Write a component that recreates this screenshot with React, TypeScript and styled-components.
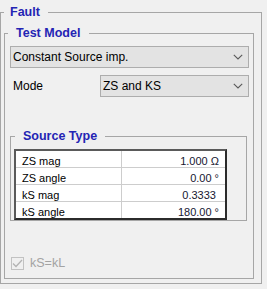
import React from 'react';
import styled, { createGlobalStyle, css } from 'styled-components';

const GlobalStyle = createGlobalStyle`
  html, body {
    margin: 0;
    padding: 0;
    background: #f0f0f0;
  }
  body {
    width: 267px;
    height: 289px;
    overflow: hidden;
    font-family: "Liberation Sans", Arial, sans-serif;
    font-size: 12px;
    color: #000;
  }
  * {
    box-sizing: border-box;
  }
`;

const groupBase = css`
  margin: 0;
  min-width: 0;
  border: 1px solid #a6a6a6;
`;

const FaultGroup = styled.fieldset`
  ${groupBase};
  width: 262px;
  margin-top: 5px;
  padding: 7px 7px 4px 3px;
`;

const ModelGroup = styled.fieldset`
  ${groupBase};
  padding: 6px 4px 8px 5px;
`;

const SourceGroup = styled.fieldset`
  ${groupBase};
  margin: 32px 2px 0 0;
  padding: 6px 0 0 3px;
`;

const Title = styled.legend<{ $shift: number; $padL: number; $padR: number }>`
  margin-left: ${(p) => p.$shift}px;
  padding: 0 ${(p) => p.$padR}px 0 ${(p) => p.$padL}px;
  font-weight: bold;
  font-size: 12.5px;
  line-height: 14px;
  color: #2424b4;
`;

const Combo = styled.div`
  height: 22px;
  display: flex;
  align-items: center;
  justify-content: space-between;
  padding: 0 5px 0 2px;
  border: 1px solid #adadad;
  background: #e3e3e3;
  font-size: 12px;
  white-space: nowrap;
`;

const ModeRow = styled.div`
  display: grid;
  grid-template-columns: 90px 1fr;
  align-items: center;
  margin-top: 7px;
`;

const ModeLabel = styled.span`
  padding-left: 3px;
  font-size: 12px;
`;

const Table = styled.div`
  width: 213px;
  border: 2px solid #2b2b2b;
  border-color: #5a5a5a #2b2b2b #2b2b2b #5a5a5a;
  background: #fff;
`;

const Row = styled.div`
  display: grid;
  grid-template-columns: 105px 1fr;
  border-bottom: 1px solid #cdcdcd;

  &:last-child {
    border-bottom: none;
  }
`;

const Cell = styled.div<{ $value?: boolean }>`
  height: 16px;
  overflow: hidden;
  padding-top: 4px;
  line-height: 13px;
  font-size: 11px;
  white-space: nowrap;
  color: ${(p) => (p.$value ? '#161630' : '#000')};
  text-align: ${(p) => (p.$value ? 'right' : 'left')};
  padding-left: ${(p) => (p.$value ? 0 : 6)}px;
  padding-right: ${(p) => (p.$value ? 6 : 0)}px;
  border-left: ${(p) => (p.$value ? '1px solid #cdcdcd' : 'none')};
`;

const CheckRow = styled.label`
  display: flex;
  align-items: center;
  gap: 6px;
  margin: 35px 0 0 1px;
  height: 14px;
  color: #a3a3a3;
  font-size: 12.5px;
`;

const CheckBox = styled.span`
  width: 13px;
  height: 13px;
  border: 1px solid #c2c2c2;
  background: #f0f0f0;
  display: flex;
  align-items: center;
  justify-content: center;
`;

const Chevron = () => (
  <svg width="10" height="6" viewBox="0 0 10 6">
    <path d="M0.8 0.8 L5 5 L9.2 0.8" fill="none" stroke="#5a5a5a" strokeWidth="1.1" />
  </svg>
);

const rows = [
  { label: 'ZS mag', value: '1.000 Ω' },
  { label: 'ZS angle', value: '0.00 °' },
  { label: 'kS mag', value: '0.3333\u00a0' },
  { label: 'kS angle', value: '180.00 °' },
];

export default function App() {
  return (
    <>
      <GlobalStyle />
      <FaultGroup>
        <Title $shift={0} $padL={6} $padR={8}>
          Fault
        </Title>
        <ModelGroup>
          <Title $shift={-2} $padL={8} $padR={9}>
            Test Model
          </Title>
          <Combo>
            <span>Constant Source imp.</span>
            <Chevron />
          </Combo>
          <ModeRow>
            <ModeLabel>Mode</ModeLabel>
            <Combo>
              <span>ZS and KS</span>
              <Chevron />
            </Combo>
          </ModeRow>
          <SourceGroup>
            <Title $shift={1} $padL={8} $padR={8}>
              Source Type
            </Title>
            <Table>
              {rows.map((r) => (
                <Row key={r.label}>
                  <Cell>{r.label}</Cell>
                  <Cell $value>{r.value}</Cell>
                </Row>
              ))}
            </Table>
          </SourceGroup>
          <CheckRow>
            <CheckBox>
              <svg width="11" height="9" viewBox="0 0 11 9">
                <path d="M1 4.5 L4 7.5 L10 1" fill="none" stroke="#b4b4b4" strokeWidth="1.3" />
              </svg>
            </CheckBox>
            kS=kL
          </CheckRow>
        </ModelGroup>
      </FaultGroup>
    </>
  );
}
